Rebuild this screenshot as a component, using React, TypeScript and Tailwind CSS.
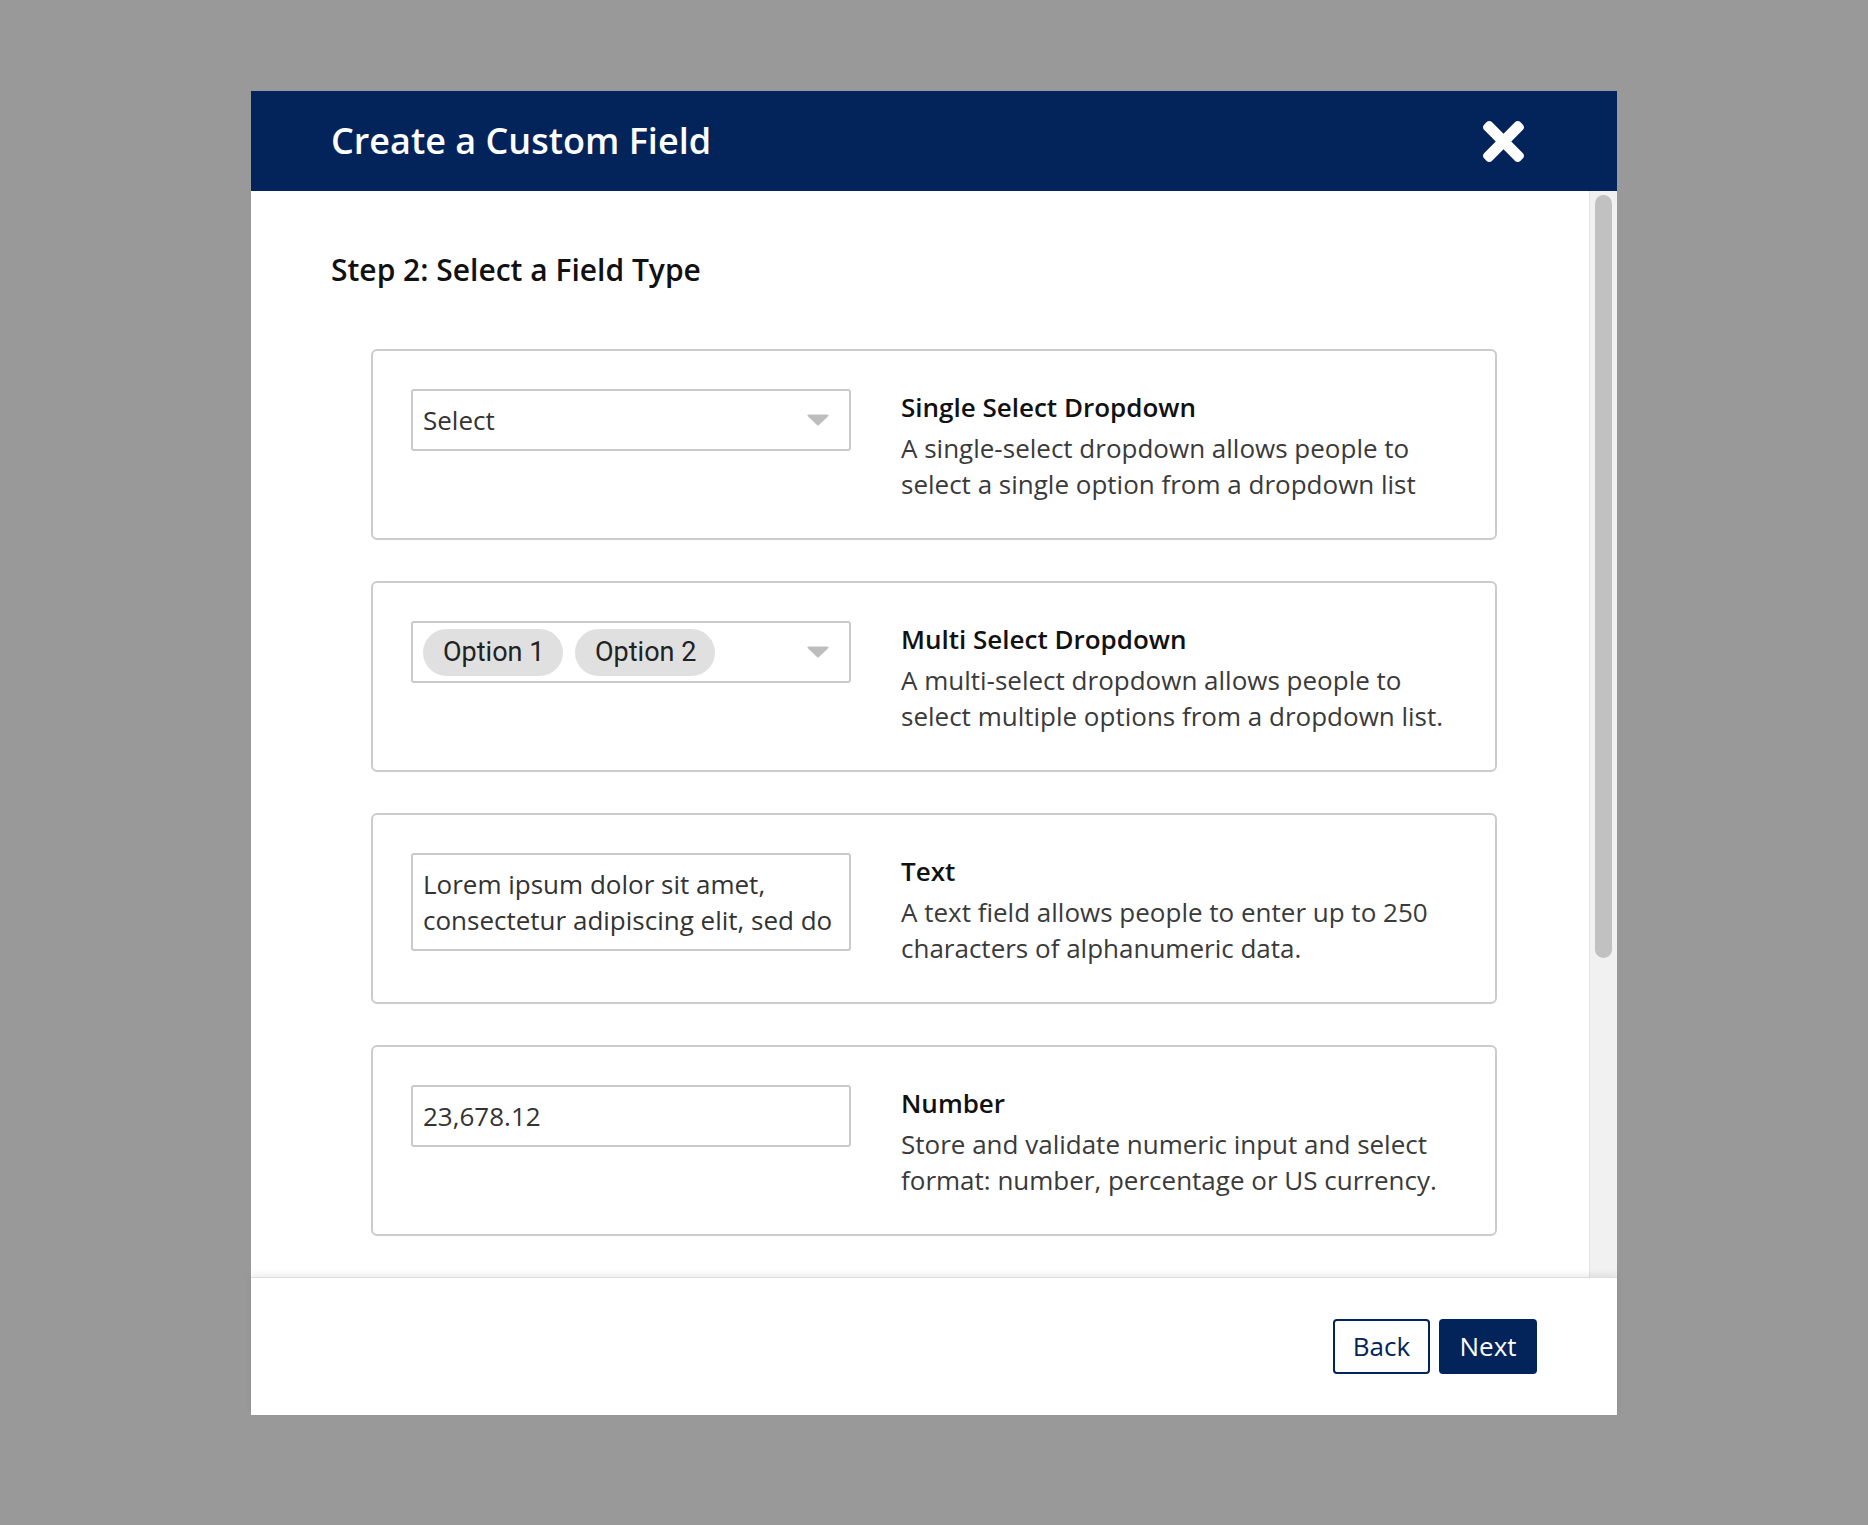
import { ReactNode } from "react";

type FieldType = {
  title: string;
  lines: string[];
  control: ReactNode;
};

function Caret() {
  return (
    <svg width="22" height="12" viewBox="0 0 22 12" className="shrink-0">
      <path d="M1.5 1.5h19L11 10.5z" fill="#bdbdbd" stroke="#bdbdbd" strokeWidth="2" strokeLinejoin="round" />
    </svg>
  );
}

function CloseIcon() {
  return (
    <svg width="41" height="41" viewBox="0 80 352 352" fill="white">
      <path d="M242.72 256l100.07-100.07c12.28-12.28 12.28-32.19 0-44.48l-22.24-22.24c-12.28-12.28-32.19-12.28-44.48 0L176 189.28 75.93 89.21c-12.28-12.28-32.19-12.28-44.48 0L9.21 111.45c-12.28 12.28-12.28 32.19 0 44.48L109.28 256 9.21 356.07c-12.28 12.28-12.28 32.19 0 44.48l22.24 22.24c12.28 12.28 32.2 12.28 44.48 0L176 322.72l100.07 100.07c12.28 12.28 32.2 12.28 44.48 0l22.24-22.24c12.28-12.28 12.28-32.19 0-44.48L242.72 256z" />
    </svg>
  );
}

function Chip({ label }: { label: string }) {
  return (
    <span className="flex h-[47px] w-[140px] items-center rounded-full bg-[#e0e0e0] pl-[20px] font-['Roboto',sans-serif] text-[27px] text-[#222]">
      {label}
    </span>
  );
}

const fieldTypes: FieldType[] = [
  {
    title: "Single Select Dropdown",
    lines: ["A single-select dropdown allows people to", "select a single option from a dropdown list"],
    control: (
      <div className="flex h-[62px] items-center justify-between rounded-[3px] border-2 border-[#cacaca] pl-[10px] pr-[20px] text-[26px] text-[#333]">
        <span>Select</span>
        <Caret />
      </div>
    ),
  },
  {
    title: "Multi Select Dropdown",
    lines: ["A multi-select dropdown allows people to", "select multiple options from a dropdown list."],
    control: (
      <div className="flex h-[62px] items-center rounded-[3px] border-2 border-[#cacaca] pl-[10px] pr-[20px]">
        <div className="flex flex-1 gap-[12px]">
          <Chip label="Option 1" />
          <Chip label="Option 2" />
        </div>
        <Caret />
      </div>
    ),
  },
  {
    title: "Text",
    lines: ["A text field allows people to enter up to 250", "characters of alphanumeric data."],
    control: (
      <div className="overflow-hidden whitespace-nowrap rounded-[3px] border-2 border-[#cacaca] px-[10px] py-[11px] text-[26px] leading-[36px] text-[#333]">
        <div>Lorem ipsum dolor sit amet,</div>
        <div>consectetur adipiscing elit, sed do</div>
      </div>
    ),
  },
  {
    title: "Number",
    lines: ["Store and validate numeric input and select", "format: number, percentage or US currency."],
    control: (
      <div className="flex h-[62px] items-center rounded-[3px] border-2 border-[#cacaca] px-[10px] text-[26px] text-[#333]">
        23,678.12
      </div>
    ),
  },
];

export default function App() {
  return (
    <div className="min-h-[1525px] bg-[#999999] pt-[91px] font-['Open_Sans',sans-serif]">
      <div className="mx-auto w-[1366px] bg-white">
        <header className="flex h-[100px] items-center justify-between bg-[#02245b] pl-[80px] pr-[93px]">
          <h1 className="text-[36px] font-semibold text-white">Create a Custom Field</h1>
          <CloseIcon />
        </header>

        <div className="flex h-[1086px] overflow-hidden">
          <div className="flex-1 pl-[80px] pt-[59px]">
            <h2 className="mb-[59px] text-[30px] leading-[40px] font-semibold text-[#111]">
              Step 2: Select a Field Type
            </h2>
            <div className="ml-10 flex w-[1126px] flex-col gap-[41px]">
              {fieldTypes.map((f) => (
                <div key={f.title} className="flex rounded-md border-2 border-[#cccccc] px-[38px] pt-[38px] pb-[36px]">
                  <div className="w-[440px] shrink-0">{f.control}</div>
                  <div className="ml-[50px] whitespace-nowrap">
                    <div className="mb-[5px] text-[26px] leading-[36px] font-semibold text-[#111]">{f.title}</div>
                    {f.lines.map((l) => (
                      <div key={l} className="text-[26px] leading-[36px] text-[#3a3a3a]">
                        {l}
                      </div>
                    ))}
                  </div>
                </div>
              ))}
            </div>
          </div>
          <div className="w-[28px] shrink-0 border-l border-[#e4e4e4] bg-[#f1f1f1] px-[5px] pt-[4px]">
            <div className="h-[763px] rounded-full bg-[#c1c1c1]" />
          </div>
        </div>

        <footer className="relative flex h-[138px] items-center justify-end gap-[9px] border-t border-[#dedede] pr-[80px] shadow-[0_-3px_6px_rgba(0,0,0,0.07)]">
          <button className="h-[55px] w-[97px] rounded-[4px] border-2 border-[#02245b] text-[26px] text-[#02245b]">
            Back
          </button>
          <button className="h-[55px] w-[98px] rounded-[4px] bg-[#02245b] text-[26px] text-white">
            Next
          </button>
        </footer>
      </div>
    </div>
  );
}
